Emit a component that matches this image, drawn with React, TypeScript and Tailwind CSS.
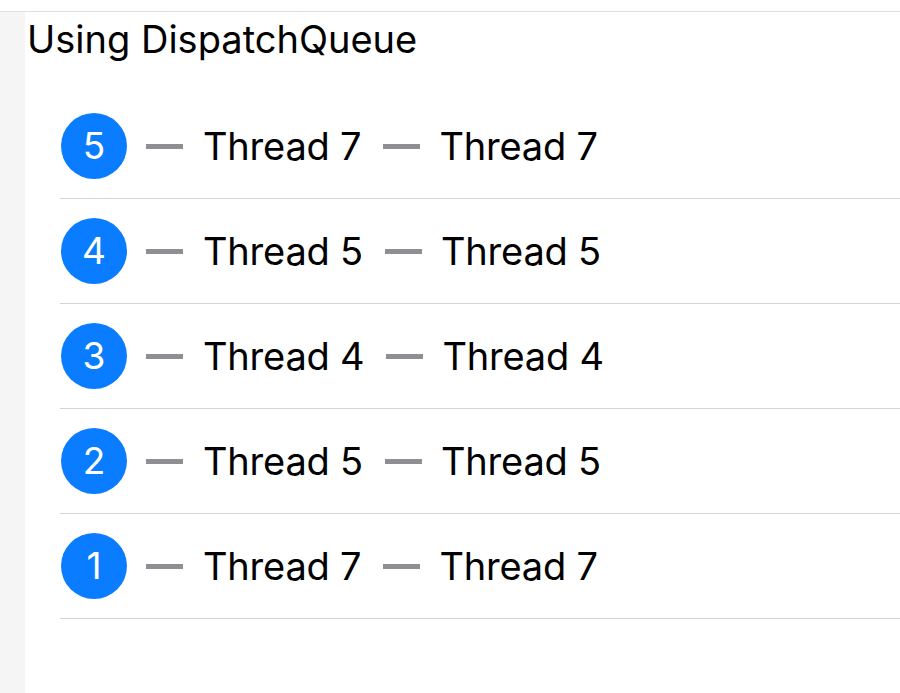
const rows = [
  { n: 5, a: "Thread 7", b: "Thread 7" },
  { n: 4, a: "Thread 5", b: "Thread 5" },
  { n: 3, a: "Thread 4", b: "Thread 4" },
  { n: 2, a: "Thread 5", b: "Thread 5" },
  { n: 1, a: "Thread 7", b: "Thread 7" },
];

function Dash() {
  return <div className="h-[5px] w-[37px] shrink-0 bg-[#8e8e93]" />;
}

export default function App() {
  return (
    <div className="flex h-[693px] w-[900px] flex-col overflow-hidden bg-white font-['Inter',sans-serif] text-black">
      <div className="h-[12px] shrink-0 border-b border-[#dedede]" />
      <div className="flex flex-1">
        <div className="w-[25px] shrink-0 bg-[#f5f5f5]" />
        <div className="flex-1">
          <h1 className="mt-[5px] ml-[2px] text-[38px] leading-[45px]">Using DispatchQueue</h1>
          <ul className="mt-[32px] ml-[35px]">
            {rows.map((r) => (
              <li key={r.n} className="flex h-[105px] items-center border-b border-[#d4d4d4] pl-[1px]">
                <div className="flex h-[66px] w-[66px] shrink-0 items-center justify-center rounded-full bg-[#0a7cff] text-[37px] text-white">
                  {r.n}
                </div>
                <div className="ml-[19px]">
                  <Dash />
                </div>
                <span className="ml-[20px] text-[38px] tracking-[-0.2px]">{r.a}</span>
                <div className="ml-[22px]">
                  <Dash />
                </div>
                <span className="ml-[19px] text-[38px] tracking-[-0.2px]">{r.b}</span>
              </li>
            ))}
          </ul>
        </div>
      </div>
    </div>
  );
}
